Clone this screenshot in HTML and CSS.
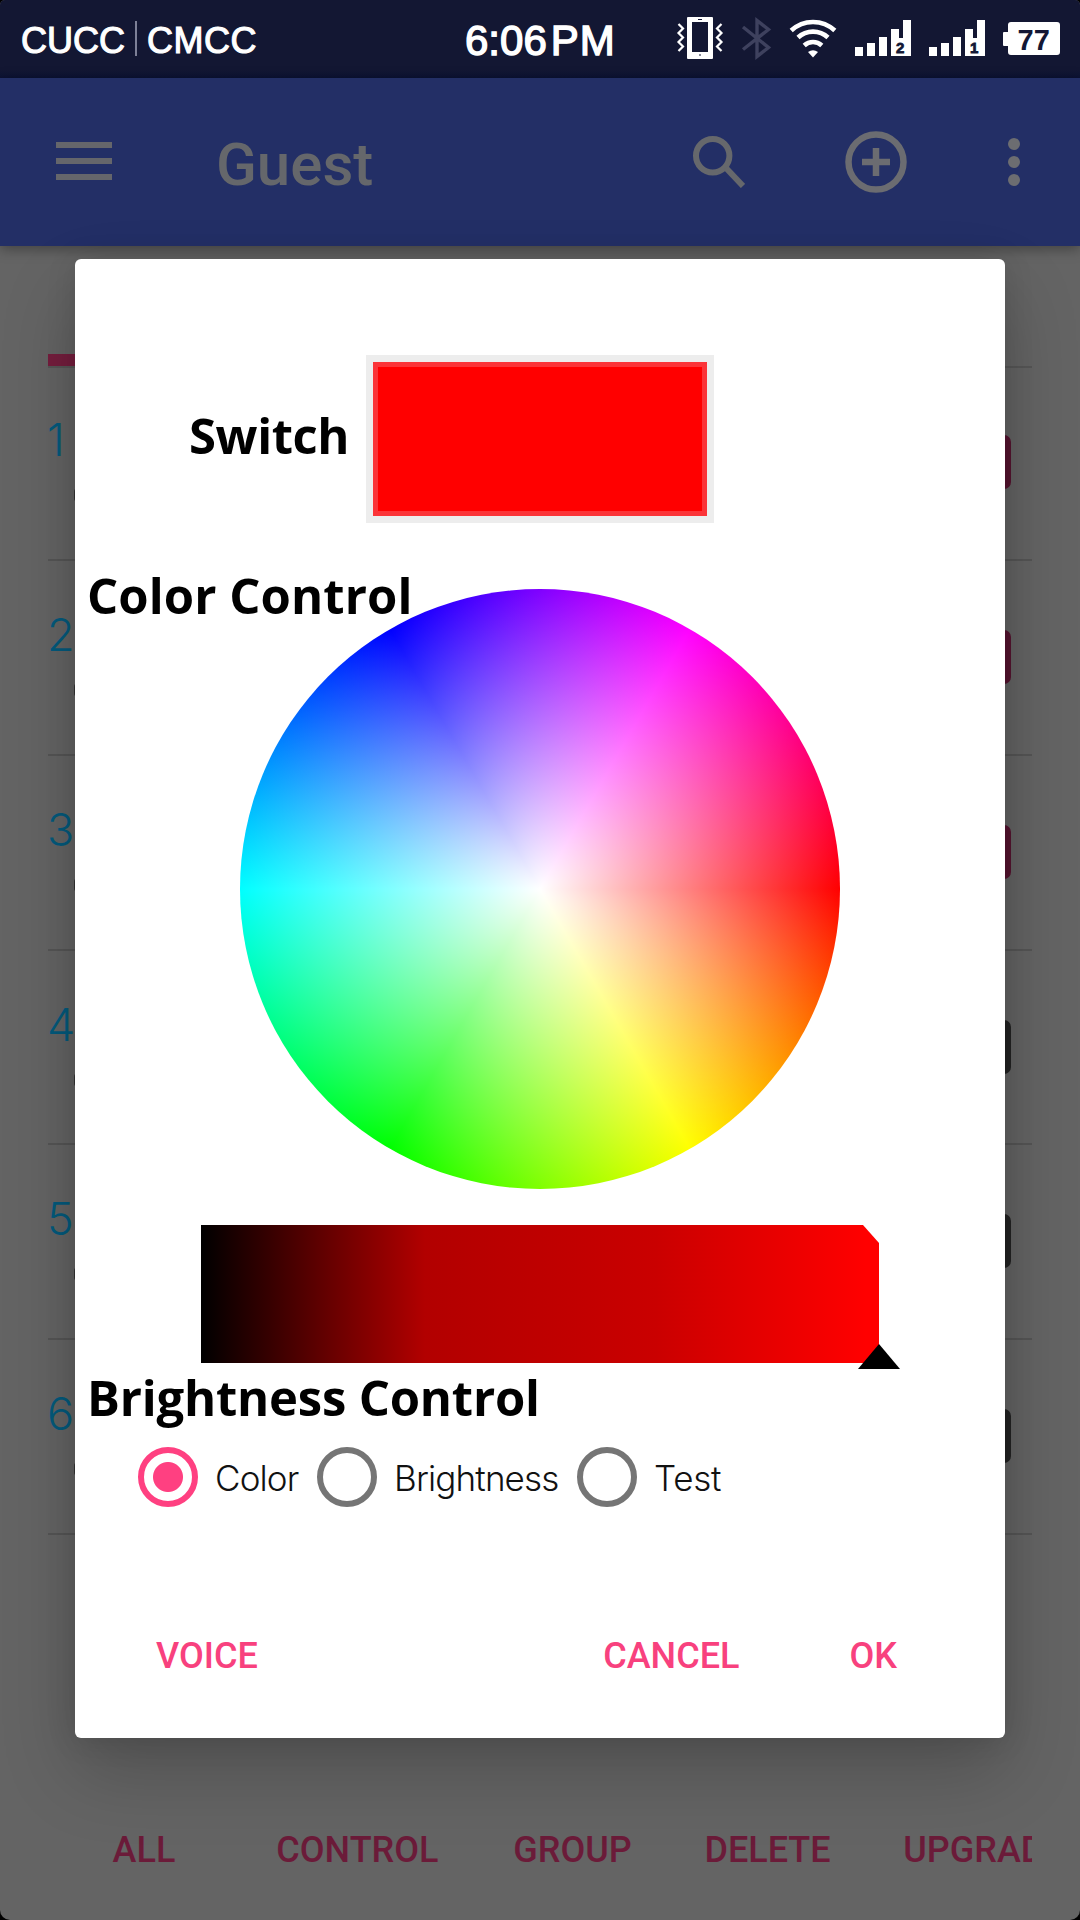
FILE: index.html
```html
<!DOCTYPE html>
<html lang="en">
<head>
<meta charset="utf-8">
<title>Guest</title>
<link rel="stylesheet" href="styles.css">
</head>
<body>
<div class="screen">
  <header class="status">
    <div class="carriers"><span>CUCC</span><i class="split"></i><span class="cmcc">CMCC</span></div>
    <div class="clock"><span>6:06</span><span class="ampm">PM</span></div>
    <svg class="tray" width="388" height="78" viewBox="692 0 388 78" overflow="visible">
      <path fill="#fff" fill-rule="evenodd" d="M688 17h24q1 0 1 1v40q0 1-1 1h-24q-1 0-1-1V18q0-1 1-1zM692 22v30h16V22z"/>
      <path stroke="#131735" stroke-width="1.2" d="M698 19.5h4M699 55h2"/>
      <path fill="none" stroke="#fff" stroke-width="2.2" d="M678.500 24l4.500 4.500-4.500 4.500 4.500 4.500-4.500 4.500 4.500 4.500-4.500 4.500M721.500 24l-4.500 4.500 4.500 4.500-4.500 4.500 4.500 4.500-4.500 4.500 4.500 4.500"/>
      <path fill="none" stroke="#3e415e" stroke-width="3.400" d="M743 27l25.500 20.500L757 56.500V20.500l11.500 9L743 49.500"/>
      <g fill="none" stroke="#fff" stroke-width="4.600">
        <path d="M791.200 30.500a32 32 0 0 1 43.600 0"/>
        <path d="M798 37.500a22 22 0 0 1 30 0"/>
        <path d="M804.200 45.500a13 13 0 0 1 17.600 0"/>
      </g>
      <path fill="#fff" d="M808 52q5-3.500 10 0l-5 5.500z"/>
      <g id="signal" fill="#fff">
        <path d="M855 47h8v9h-8zM867 43h8v13h-8zM879 37h8v19h-8zM891 29h8v9h4V20h8v36h-20z"/>
      </g>
      <use href="#signal" x="74"/>
      <text class="sim" x="896" y="53">2</text>
      <text class="sim" x="970" y="53">1</text>
      <path fill="#fff" d="M1011 22h46q3 0 3 3v27q0 3-3 3h-46q-3 0-3-3v-6h-4q-1 0-1-1V33q0-1 1-1h4v-7q0-3 3-3z"/>
      <text class="level" x="1017.500" y="49.500">77</text>
    </svg>
  </header>

  <div class="appbar">
    <div class="menu"><i></i><i></i><i></i></div>
    <h1>Guest</h1>
    <svg class="search" width="53" height="53" viewBox="0 0 53 53"><circle cx="20.700" cy="20.700" r="16.700"/><path d="M34 33L51 51"/></svg>
    <svg class="add" width="62" height="62" viewBox="0 0 62 62"><circle cx="31" cy="31" r="27.500"/><path d="M17 31h28M31 17v28"/></svg>
    <div class="more"><i></i><i></i><i></i></div>
  </div>

  <main class="list">
    <div class="head"><i></i></div>
    <div class="row first"><b>1</b><i class="edge"></i><i class="toggle on"></i></div>
    <div class="row"><b>2</b><i class="edge"></i><i class="toggle on"></i></div>
    <div class="row"><b>3</b><i class="edge"></i><i class="toggle on"></i></div>
    <div class="row"><b>4</b><i class="edge"></i><i class="toggle"></i></div>
    <div class="row"><b>5</b><i class="edge"></i><i class="toggle"></i></div>
    <div class="row"><b>6</b><i class="edge"></i><i class="toggle"></i></div>
  </main>

  <nav class="actions">
    <span class="all">ALL</span><span>CONTROL</span><span class="group">GROUP</span><span>DELETE</span><span>UPGRADE</span>
  </nav>

  <section class="dialog">
    <div class="switch"><span class="label">Switch</span><div class="swatch"></div></div>
    <div class="palette">
      <div class="wheel"></div>
      <span class="label over">Color Control</span>
    </div>
    <div class="brightness">
      <div class="ramp"></div>
      <svg class="thumb" width="42" height="25" viewBox="0 0 42 25"><path d="M21 0l21 25H0z"/></svg>
    </div>
    <span class="label under">Brightness Control</span>
    <div class="modes">
      <div class="mode checked"><i></i><span>Color</span></div>
      <div class="mode"><i></i><span>Brightness</span></div>
      <div class="mode"><i></i><span class="wide">Test</span></div>
    </div>
    <footer class="buttons"><span class="voice">VOICE</span><span>CANCEL</span><span>OK</span></footer>
  </section>
</div>
</body>
</html>
```
FILE: styles.css
```css
* { box-sizing: border-box; }
body { margin: 0; background: #000; }
i { display: block; }

.screen {
  position: relative;
  width: 1080px;
  height: 1920px;
  overflow: hidden;
  display: flex;
  flex-direction: column;
  background: #646464;
  border-radius: 5px 5px 10px 10px;
  font-family: Roboto, sans-serif;
}

/* Status bar */
.status {
  flex: none;
  height: 78px;
  display: grid;
  grid-template-columns: 464px 228px 388px;
  background: linear-gradient(#131733, #131733 70px, #0b1234 78px);
  color: #fff;
  font-family: "Liberation Sans", Arial, sans-serif;
}
.carriers {
  display: flex;
  padding-left: 21px;
  font-size: 36px;
  line-height: 81px;
  -webkit-text-stroke: 1.100px #fff;
}
.split { width: 2px; height: 35px; margin: 21px 10px 0 10px; background: #7d8097; }
.cmcc { letter-spacing: 0.5px; }
.clock {
  display: flex;
  padding-left: 1px;
  font-size: 42px;
  line-height: 81px;
  -webkit-text-stroke: 1.400px #fff;
}
.ampm { margin-left: 4px; letter-spacing: 1px; }
.sim { font: bold 15px "Liberation Sans", sans-serif; fill: #131735; stroke: #131735; stroke-width: 0.8px; }
.level { font: bold 29px "Liberation Sans", sans-serif; fill: #131735; }

/* App bar */
.appbar {
  flex: none;
  height: 168px;
  display: flex;
  align-items: flex-start;
  background: #232f66;
  box-shadow: 0 3px 12px rgba(0, 0, 0, 0.35);
}
.menu { display: grid; gap: 10px; width: 56px; margin: 64px 0 0 56px; }
.menu i { height: 6px; background: #65666b; }
.appbar h1 {
  width: 476px;
  margin: 49px 0 0 104px;
  font-size: 60px;
  font-weight: 500;
  line-height: 76px;
  color: #65676b;
}
.appbar svg { fill: none; stroke: #66686c; stroke-width: 6px; }
.search { margin-top: 57px; }
.appbar .add { margin: 53px 0 0 100px; stroke-width: 6.500px; stroke: #6b6c71; }
.more { display: grid; gap: 6px; margin: 60px 0 0 101px; }
.more i { width: 12px; height: 12px; border-radius: 50%; background: #6c6d71; }

/* Device list */
.list { flex: none; padding: 108px 48px 0; height: 1564px; }
.head { height: 14px; border-bottom: 2px solid #575757; }
.head i { width: 300px; height: 12px; background: #751e3e; }
.row {
  display: flex;
  height: 194.800px;
  border-bottom: 2px solid #555;
}
.row.first { height: 193px; }
.row b {
  width: 26px;
  margin: 47px 0 0 -1px;
  font-family: Inter, sans-serif;
  font-size: 45px;
  font-weight: 300;
  line-height: 54px;
  letter-spacing: -1px;
  color: #045a7c;
}
.row.first b { margin-top: 45px; }
.edge { width: 20px; height: 14px; margin: 122px 0 0 1px; border-radius: 4px; background: #333; }
.row.first .edge { margin-top: 120px; }
.toggle { width: 90px; height: 54px; margin: 69px 21px 0 auto; border-radius: 7px; background: #232323; }
.row.first .toggle { margin-top: 67px; }
.toggle.on { background: #561430; }

.actions {
  display: flex;
  margin: 0 48px;
  height: 110px;
  padding-top: 19px;
  overflow: hidden;
  font-size: 36px;
  font-weight: 500;
  line-height: 42px;
  color: #6b1b39;
}
.actions span { flex: none; padding: 0 36.300px; }
.actions .all { width: 192px; padding: 0; text-align: center; }
.actions .group { padding-left: 38.500px; }

/* Dialog */
.dialog {
  position: absolute;
  left: 75px;
  top: 259px;
  width: 930px;
  height: 1479px;
  display: flex;
  flex-direction: column;
  align-items: flex-start;
  padding-top: 96px;
  border-radius: 6px;
  background: #fff;
  box-shadow: 0 34px 76px rgba(0, 0, 0, 0.2), 0 2px 30px rgba(0, 0, 0, 0.12);
}
.label {
  font-family: "Open Sans", sans-serif;
  font-size: 49px;
  font-weight: 700;
  line-height: 60px;
  color: #000;
  white-space: nowrap;
}
.switch { display: flex; align-items: center; padding-left: 114px; }
.switch .label { width: 177px; padding-bottom: 8px; letter-spacing: -0.400px; }
.swatch {
  width: 348px;
  height: 168px;
  border: 7px solid #ededed;
  background: #f00;
  box-shadow: inset 0 0 0 5px #fb3438;
}
.palette { position: relative; align-self: center; width: 930px; margin-top: 66px; }
.wheel {
  width: 600px;
  height: 600px;
  margin: 0 auto;
  border-radius: 50%;
  background:
    radial-gradient(closest-side, #fff, rgba(255, 255, 255, 0)),
    conic-gradient(from 90deg, #f00, #ff0, #0f0, #0ff, #00f, #f0f, #f00);
}
.over { position: absolute; left: 12px; top: -24px; letter-spacing: 0.080px; }
.brightness { position: relative; margin: 36px 0 0 126px; }
.ramp {
  width: 678px;
  height: 138px;
  background: linear-gradient(90deg, #000, #b20000 33%, #ca0000 67%, #f00 98%);
  clip-path: polygon(0 0, 662px 0, 100% 18px, 100% 100%, 0 100%);
}
.thumb { position: absolute; right: -21px; bottom: -6px; }
.under { margin: 4px 0 0 12px; letter-spacing: -0.200px; }
.modes {
  display: grid;
  grid-template-columns: 179px 260px auto;
  margin: 20px 0 0 63px;
}
.mode { display: flex; gap: 17px; align-items: center; }
.mode i { width: 60px; height: 60px; border: 6px solid #757575; border-radius: 50%; }
.mode span {
  padding-top: 1px;
  font-family: Inter, sans-serif;
  font-size: 35px;
  font-weight: 300;
  letter-spacing: -0.850px;
  color: #111;
}
.mode .wide { letter-spacing: -0.300px; }
.mode.checked i {
  border-color: #ff4081;
  background: radial-gradient(circle, #ff4081 14.500px, #fff 15.500px);
}
.buttons {
  display: flex;
  align-self: stretch;
  gap: 110px;
  margin-top: 128px;
  padding: 0 108px 0 81px;
  font-size: 36px;
  font-weight: 500;
  line-height: 42px;
  color: #f8417e;
}
.voice { margin-right: auto; }
```
